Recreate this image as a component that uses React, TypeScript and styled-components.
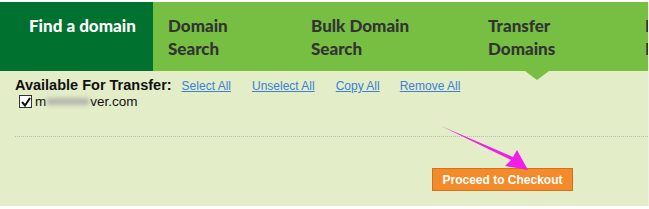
import React from "react"
import styled, { createGlobalStyle } from "styled-components"

const Global = createGlobalStyle`
  html, body {
    margin: 0;
    padding: 0;
    background: #ffffff;
  }
`

const Page = styled.div`
  position: relative;
  width: 648px;
  height: 204px;
  margin-top: 2px;
  background: #e3edc7;
  border-right: 1px solid #eef2e4;
  overflow: hidden;
  font-family: "Liberation Sans", Arial, sans-serif;
`

const Nav = styled.ul`
  display: flex;
  margin: 0;
  padding: 0;
  list-style: none;
  height: 69px;
  background: #77bf43;
`

const NavItem = styled.li<{ $active?: boolean; $w: number; $pad: number }>`
  position: relative;
  box-sizing: border-box;
  flex: 0 0 ${(p) => p.$w}px;
  padding: 12px 0 0 ${(p) => p.$pad}px;
  background: ${(p) => (p.$active ? "#00712e" : "transparent")};
  color: ${(p) => (p.$active ? "#ffffff" : "#333333")};
  font-family: Lato, "Open Sans", sans-serif;
  font-weight: 900;
  font-size: 17px;
  line-height: 23px;
  white-space: nowrap;
`

const Pointer = styled.span`
  position: absolute;
  left: 52px;
  top: 69px;
  width: 0;
  height: 0;
  border-left: 12px solid transparent;
  border-right: 12px solid transparent;
  border-top: 9px solid #77bf43;
`

const Body = styled.div`
  padding: 6px 0 0 15px;
`

const Header = styled.div`
  display: flex;
  align-items: baseline;
  height: 17px;
`

const Label = styled.span`
  font-weight: bold;
  font-size: 14.5px;
  color: #111;
  margin-right: 10px;
`

const Action = styled.a<{ $gap: number }>`
  font-size: 12px;
  color: #3d80d8;
  text-decoration: underline;
  margin-right: ${(p) => p.$gap}px;
  cursor: pointer;
`

const DomainRow = styled.label`
  display: flex;
  align-items: center;
  margin: 0 0 0 4px;
  font-size: 13.5px;
  color: #111;
`

const Check = styled.span`
  box-sizing: border-box;
  width: 13px;
  height: 13px;
  border: 1px solid #333;
  background: #fff;
  margin-right: 3px;
  display: flex;
  align-items: center;
  justify-content: center;
`

const Blur = styled.span`
  display: inline-block;
  width: 42px;
  height: 7px;
  margin: 0 1px;
  background: #b3b7ae;
  filter: blur(2px);
`

const Divider = styled.hr`
  margin: 27px 0 0 0;
  border: 0;
  border-top: 1px dotted #b9bcb2;
`

const Footer = styled.div`
  display: flex;
  justify-content: flex-end;
  padding: 31px 75px 0 0;
`

const Checkout = styled.button`
  width: 141px;
  height: 23px;
  background: #f58a2a;
  border: 1px solid #d0731f;
  color: #fff;
  font-family: "Liberation Sans", Arial, sans-serif;
  font-weight: bold;
  font-size: 12px;
  padding: 0;
`

const Arrow = styled.svg`
  position: absolute;
  left: 0;
  top: 0;
  pointer-events: none;
`

const items = [
  { label: ["Find a domain"], w: 153, pad: 29, active: true },
  { label: ["Domain", "Search"], w: 143, pad: 15 },
  { label: ["Bulk Domain", "Search"], w: 177, pad: 15 },
  { label: ["Transfer", "Domains"], w: 157, pad: 15, pointer: true },
  { label: ["Domain", "Renewal"], w: 140, pad: 15 },
]

export default function App() {
  return (
    <>
      <Global />
      <Page>
        <Nav>
          {items.map((it) => (
            <NavItem key={it.label.join(" ")} $active={it.active} $w={it.w} $pad={it.pad}>
              {it.label.map((l) => (
                <div key={l}>{l}</div>
              ))}
              {it.pointer && <Pointer />}
            </NavItem>
          ))}
        </Nav>
        <Body>
          <Header>
            <Label>Available For Transfer:</Label>
            <Action $gap={21}>Select All</Action>
            <Action $gap={21}>Unselect All</Action>
            <Action $gap={20}>Copy All</Action>
            <Action $gap={0}>Remove All</Action>
          </Header>
          <DomainRow>
            <Check>
              <svg width="10" height="10" viewBox="0 0 10 10">
                <path d="M1 5 L4 8.5 L9 1" fill="none" stroke="#111" strokeWidth="2" />
              </svg>
            </Check>
            m<Blur />ver.com
          </DomainRow>
          <Divider />
          <Footer>
            <Checkout>Proceed to Checkout</Checkout>
          </Footer>
        </Body>
        <Arrow width="648" height="204" viewBox="0 0 648 204">
          <path d="M441 124 L513 155 L517 148 L528 168 L505 164 L511 158 Z" fill="#f21ee8" />
        </Arrow>
      </Page>
    </>
  )
}
